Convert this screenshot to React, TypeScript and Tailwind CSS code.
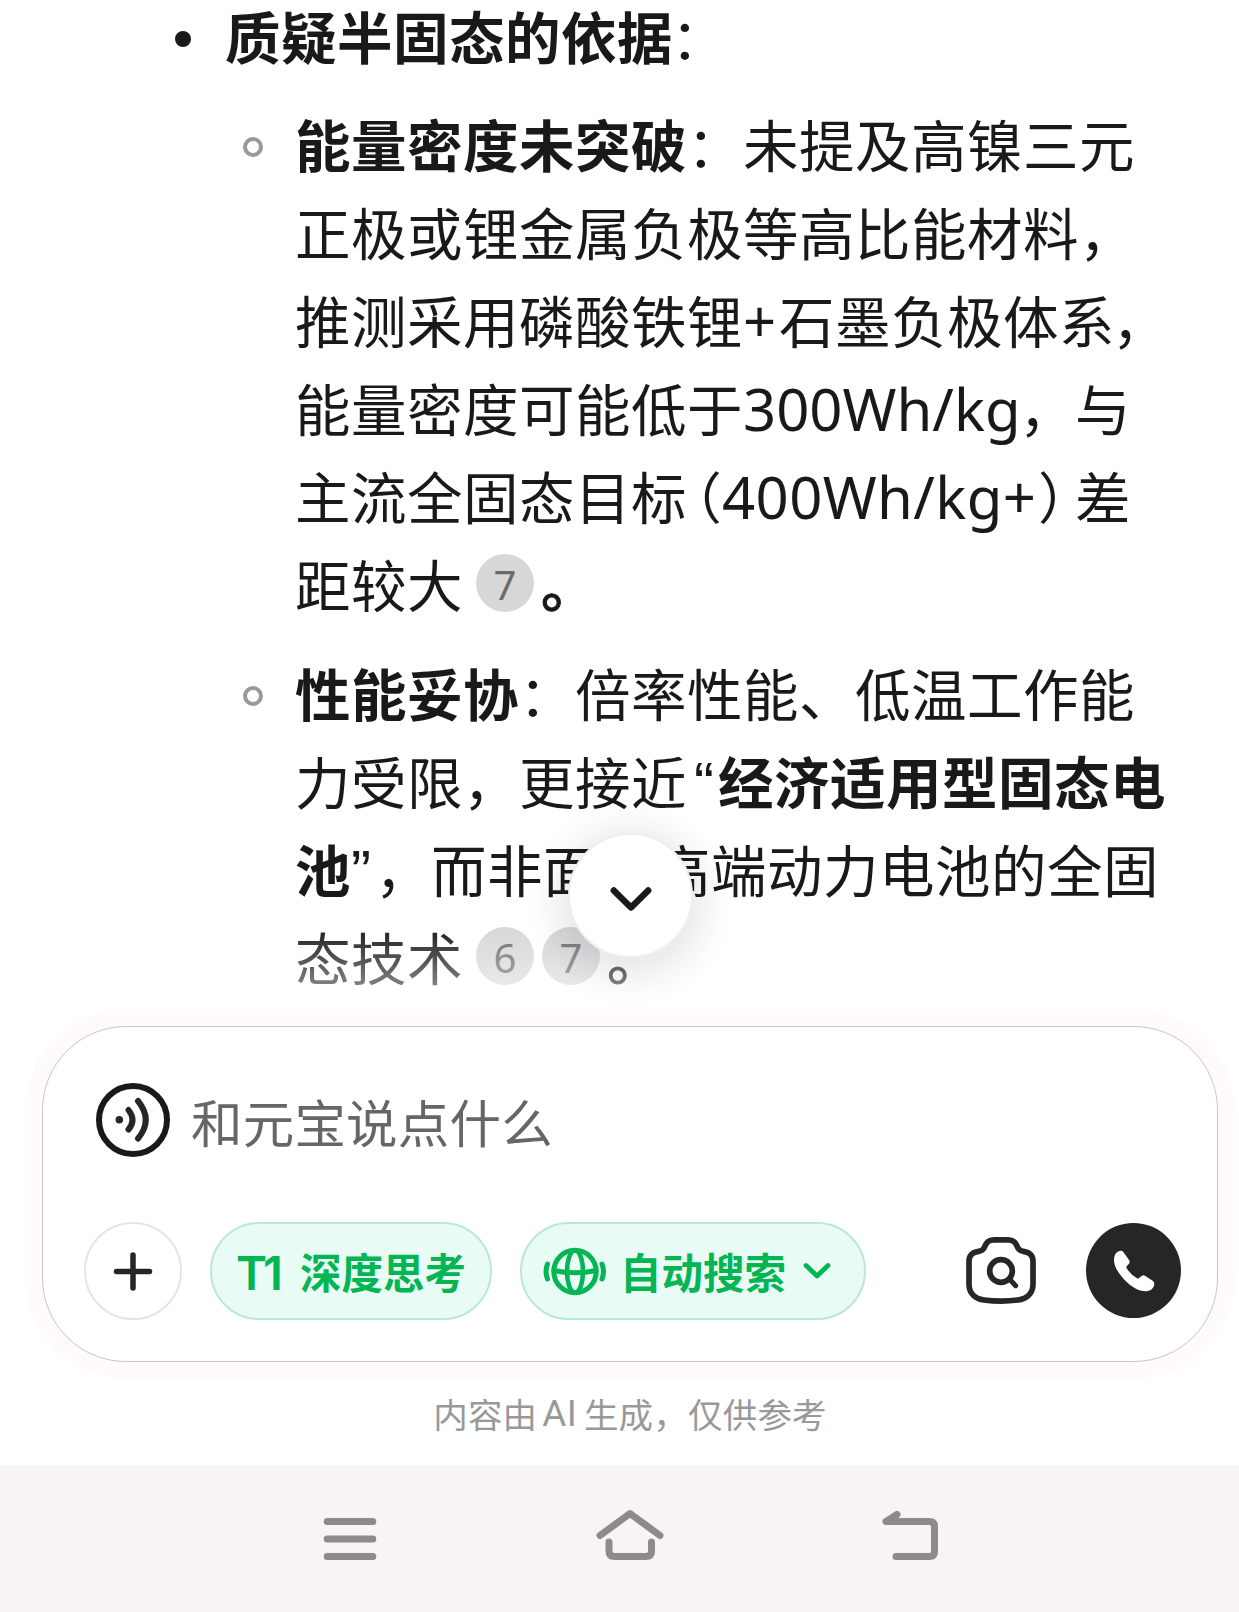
import type { ReactNode } from 'react';

function Line({ children }: { children: ReactNode }) {
  return <div className="flex h-[88px] items-baseline whitespace-nowrap leading-[88px]">{children}</div>;
}

function Latin({ children, className = 'tracking-normal' }: { children: ReactNode; className?: string }) {
  return (
    <span className={`font-['Noto_Sans','Noto_Sans_CJK_SC',sans-serif] text-[58px] leading-none ${className}`}>
      {children}
    </span>
  );
}

function Quote({ children, className = '' }: { children: ReactNode; className?: string }) {
  return (
    <span className={`font-['Liberation_Sans',sans-serif] text-[60px] leading-none tracking-normal ${className}`}>
      {children}
    </span>
  );
}

function Cite({ children }: { children: ReactNode }) {
  return (
    <span className="mt-[15px] flex size-[58px] items-center justify-center self-start rounded-full bg-[#d7d7d7] font-['Noto_Sans',sans-serif] text-[40px] leading-none tracking-normal text-[#6b6b6b]">
      <span className="mt-[3px]">{children}</span>
    </span>
  );
}

function Ring() {
  return <span className="mt-[38px] mr-[32px] size-5 shrink-0 rounded-full border-4 border-[#9b999b]" />;
}

function Answer() {
  return (
    <section className="-mt-[9px] text-[55.500px] tracking-[0.5px] text-[#191919]">
      <div className="flex pl-[175px]">
        <span className="mt-[40px] mr-[34px] size-4 rounded-full bg-[#191919]" />
        <Line>
          <b>质疑半固态的依据</b>
          <span className="-ml-[2px]">：</span>
        </Line>
      </div>

      <div className="mt-5 flex pl-[243px]">
        <Ring />
        <div>
          <Line>
            <b>能量密度未突破</b>：未提及高镍三元
          </Line>
          <Line>正极或锂金属负极等高比能材料，</Line>
          <Line>
            推测采用磷酸铁锂<Latin className="w-[36px]">+</Latin>石墨负极体系
            <span className="-ml-[3px]">，</span>
          </Line>
          <Line>
            能量密度可能低于<Latin className="w-[276px] tracking-normal">300Wh/kg</Latin>，与
          </Line>
          <Line>
            主流全固态目标
            <span className="ml-[7px] w-7 [font-feature-settings:'halt']">（</span>
            <Latin className="w-[314px] tracking-[0.4px]">400Wh/kg+</Latin>
            <span className="mr-[9px] ml-[2px] w-7 [font-feature-settings:'halt']">）</span>差
          </Line>
          <Line>
            距较大<span className="w-[13px]" />
            <Cite>7</Cite>
            <span className="ml-[7px] font-medium [-webkit-text-stroke:1px]">。</span>
          </Line>
        </div>
      </div>

      <div className="mt-[21px] flex pl-[243px]">
        <Ring />
        <div>
          <Line>
            <b>性能妥协</b>：倍率性能、低温工作能
          </Line>
          <Line>
            力受限，更接近<Quote className="w-[31px] pl-[7px]">“</Quote>
            <b>经济适用型固态电</b>
          </Line>
          <Line>
            <b>池</b>
            <Quote className="w-[24px]">”</Quote>，而非面向高端动力电池的全固
          </Line>
          <Line>
            态技术<span className="w-[13px]" />
            <Cite>6</Cite>
            <span className="w-2" />
            <Cite>7</Cite>
            <span className="ml-[7px] [-webkit-text-stroke:1px]">。</span>
          </Line>
        </div>
      </div>
    </section>
  );
}

function ScrollButton() {
  return (
    <button className="absolute top-[833px] left-[568px] flex size-[125px] items-center justify-center rounded-full border-2 border-[#efeef0] bg-white shadow-[0_8px_36px_10px_rgba(60,30,60,0.12)]">
      <svg width="44" height="30" viewBox="0 0 44 30" fill="none" stroke="#1a1a1a" strokeWidth="6.5" strokeLinecap="round" strokeLinejoin="round" className="mt-[7px]">
        <path d="M4.800 6.500L22 23.500L39.200 6.500" />
      </svg>
    </button>
  );
}

function VoiceIcon() {
  return (
    <svg width="74" height="74" viewBox="0 0 74 74" fill="none" stroke="#262626" strokeWidth="6" strokeLinecap="round">
      <circle cx="37" cy="37" r="34" stroke="#191919" />
      <circle cx="23.300" cy="36.700" r="3.800" fill="#262626" stroke="none" />
      <path d="M32.500 27Q40.500 37 32.500 46.500" />
      <path d="M42 18Q57.500 37 42 55.500" />
    </svg>
  );
}

function GlobeIcon() {
  return (
    <svg width="64" height="50" viewBox="0 0 64 50" fill="none" stroke="#04b553" strokeWidth="5" strokeLinecap="round">
      <circle cx="32" cy="25.500" r="21.200" />
      <ellipse cx="32" cy="25.500" rx="8" ry="21" strokeWidth="4.500" />
      <path d="M11 24.500Q32 29 53 24.500" />
      <path d="M4.500 18Q1.500 25.500 4.500 33M59 18Q62 25.500 59 33" />
    </svg>
  );
}

function CameraIcon() {
  return (
    <svg width="72" height="70" viewBox="135 138 216 210" fill="none" stroke="#262626" strokeWidth="17" strokeLinecap="round" strokeLinejoin="round">
      <path d="M222 149.500H264C290 149.500 288 168 297 178C305 187 316 183 326 189C336 195 339 204 339 214V283C339 312 318 327 294 330Q243 337 192 330C168 327 147 312 147 283V214C147 204 150 195 160 189C170 183 181 187 189 178C198 168 196 149.500 222 149.500Z" />
      <circle cx="243" cy="243" r="34" />
      <path d="M269 268L287 287" strokeWidth="15" />
    </svg>
  );
}

function PhoneIcon() {
  return (
    <svg width="44" height="44" viewBox="575 175 132 132" fill="white">
      <path d="M581 208C581 190 590 181 602 180Q606 180 609 184L626 208Q630 213 626 219L619 227Q617 230 619 233Q631 252 650 263Q653 265 656 262L664 256Q669 252 674 255L697 270Q702 273 702 280C701 294 689 302 676 302C654 302 631 287 613 268C595 249 581 228 581 208Z" />
    </svg>
  );
}

function InputCard() {
  return (
    <section className="flex h-[336px] w-[1176px] flex-col rounded-[84px] border border-[#c6c6c6] bg-white shadow-[0_0_5px_17px_#fefafe]">
      <div className="mt-[56px] ml-[53px] flex items-center">
        <VoiceIcon />
        <span className="mt-px ml-[21px] text-[51.500px] leading-[71px] tracking-[0.2px] text-[#666]">和元宝说点什么</span>
      </div>

      <div className="mt-[65px] ml-[41px] flex items-center">
        <button className="flex size-[98px] items-center justify-center rounded-full border-2 border-[#e5e5e5]">
          <svg width="40" height="40" viewBox="0 0 40 40" fill="none" stroke="#262626" strokeWidth="5.500" strokeLinecap="round">
            <path d="M3.500 20.500H36.500M20 4V37" />
          </svg>
        </button>
        <button className="ml-7 flex h-[98px] w-[282px] items-center rounded-full border-2 border-[#b9e9d2] bg-[#e9fbf5] pl-[24px] text-[#04b553]">
          <span className="mt-[2px] w-[64px] text-left font-['Inter',sans-serif] text-[47px] leading-none font-semibold -tracking-[4px]">T1</span>
          <b className="mt-px text-[41.500px] leading-none whitespace-nowrap">深度思考</b>
        </button>
        <button className="ml-7 flex h-[98px] w-[346px] items-center rounded-full border-2 border-[#b9e9d2] bg-[#e9fbf5] pl-[21px] text-[#04b553]">
          <GlobeIcon />
          <b className="mt-px ml-[13px] text-[41.500px] leading-none whitespace-nowrap">自动搜索</b>
          <svg width="30" height="20" viewBox="0 0 30 20" fill="none" stroke="#04b553" strokeWidth="4.800" strokeLinecap="round" strokeLinejoin="round" className="ml-[16px]">
            <path d="M4 4.500L15 15L26 4.500" />
          </svg>
        </button>
        <div className="ml-[99px]">
          <CameraIcon />
        </div>
        <button className="mb-px ml-[49px] flex size-[95px] items-center justify-center rounded-full bg-[#262626]">
          <PhoneIcon />
        </button>
      </div>
    </section>
  );
}

function NavBar() {
  return (
    <nav className="h-[147px] bg-[#f7f3f7]">
      <svg width="1239" height="147" viewBox="0 1465 1239 147" fill="none" stroke="#8d8a8d" strokeWidth="7" strokeLinecap="round" strokeLinejoin="round">
        <path d="M327.200 1521.500H372.800M327.200 1539H372.800M327.200 1556.500H372.800" />
        <path d="M600 1535.500L630 1513.500L660 1535.500" />
        <path d="M609 1542V1551Q609 1556.500 614.500 1556.500H646Q651.500 1556.500 651.500 1551V1542" />
        <path d="M897 1514.500L886 1521.500H929.500Q934.500 1521.500 934.500 1526.500V1551.500Q934.500 1556.500 929.500 1556.500H896" />
      </svg>
    </nav>
  );
}

export default function App() {
  return (
    <main className="relative flex h-[1612px] w-[1239px] flex-col overflow-hidden bg-white font-['Noto_Sans_CJK_SC',sans-serif]">
      <div className="h-[1026px] shrink-0">
        <Answer />
      </div>
      <div className="absolute top-[925px] left-0 h-[101px] w-full bg-linear-to-b from-white/0 to-white/75" />
      <ScrollButton />
      <div className="relative pl-[42px]">
        <InputCard />
      </div>
      <p className="flex h-[103px] items-center justify-center pl-[21px] text-[34.500px] leading-none tracking-[0.2px] text-[#999]">
        内容由<span className="mr-[7px] ml-[5px] font-['Roboto',sans-serif] text-[37px]">AI</span>生成，仅供参考
      </p>
      <NavBar />
    </main>
  );
}
